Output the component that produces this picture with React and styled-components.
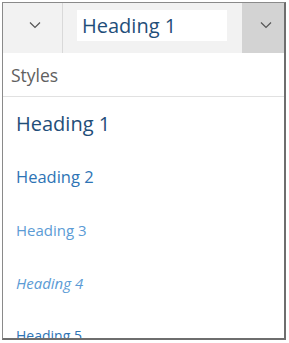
import React from "react";
import styled, { createGlobalStyle } from "styled-components";

const GlobalStyle = createGlobalStyle`
  html, body {
    margin: 0;
    padding: 0;
    background: #ffffff;
  }
  body {
    font-family: "Open Sans", "Noto Sans", sans-serif;
  }
`;

const headings = [
  { label: "Heading 1", size: 20, color: "#1f4e79", weight: 400 },
  { label: "Heading 2", size: 16.5, color: "#2e74b5", weight: 500 },
  { label: "Heading 3", size: 15, color: "#5b9bd5", weight: 400 },
  { label: "Heading 4", size: 15, color: "#5b9bd5", weight: 400, italic: true },
  { label: "Heading 5", size: 14, color: "#2e74b5", weight: 400 },
];

const Chevron = () => (
  <svg width="12" height="8" viewBox="0 0 12 8" fill="none">
    <path d="M1 1.5 L6 6.5 L11 1.5" stroke="#555555" strokeWidth="1.2" />
  </svg>
);

const App = () => {
  return (
    <>
      <GlobalStyle />
      <Frame>
        <Toolbar>
          <ToolButton>
            <Chevron />
          </ToolButton>
          <InputWrap>
            <StyleInput>Heading 1</StyleInput>
          </InputWrap>
          <ToolButton $active>
            <Chevron />
          </ToolButton>
        </Toolbar>
        <SectionTitle>Styles</SectionTitle>
        <List>
          {headings.map((h) => (
            <Item
              key={h.label}
              $size={h.size}
              $color={h.color}
              $weight={h.weight}
              $italic={h.italic}
            >
              {h.label}
            </Item>
          ))}
        </List>
      </Frame>
    </>
  );
};

const Frame = styled.div`
  box-sizing: border-box;
  margin: 2px 0 0 2px;
  width: 284px;
  height: 338px;
  border-left: 1px solid #8a8a8a;
  border-top: 1px solid #8a8a8a;
  border-right: 2px solid #6e6e6e;
  border-bottom: 2px solid #6e6e6e;
  display: flex;
  flex-direction: column;
  overflow: hidden;
  background: #ffffff;
`;

const Toolbar = styled.div`
  display: flex;
  height: 50px;
  flex-shrink: 0;
  background: #f2f2f2;
`;

const ToolButton = styled.div`
  box-sizing: border-box;
  display: flex;
  align-items: center;
  justify-content: center;
  padding-left: 5px;
  padding-bottom: 6px;
  width: ${(p) => (p.$active ? "42px" : "60px")};
  background: ${(p) => (p.$active ? "#d3d3d3" : "#f2f2f2")};
  border-right: ${(p) => (p.$active ? "none" : "1px solid #d9d9d9")};
`;

const InputWrap = styled.div`
  flex: 1;
  padding: 7px 15px 0 14px;
`;

const StyleInput = styled.div`
  box-sizing: border-box;
  height: 31px;
  background: #ffffff;
  padding-left: 5px;
  font-size: 20px;
  line-height: 31px;
  color: #1f4e79;
  white-space: nowrap;
`;

const SectionTitle = styled.div`
  box-sizing: border-box;
  height: 44px;
  flex-shrink: 0;
  padding: 0 0 0 8px;
  display: flex;
  align-items: center;
  font-size: 17.5px;
  color: #606060;
  border-bottom: 1px solid #e1e1e1;
`;

const List = styled.div`
  display: flex;
  flex-direction: column;
  padding-left: 13px;
`;

const Item = styled.div`
  height: 53px;
  flex-shrink: 0;
  display: flex;
  align-items: center;
  font-size: ${(p) => p.$size}px;
  font-weight: ${(p) => p.$weight};
  font-style: ${(p) => (p.$italic ? "italic" : "normal")};
  color: ${(p) => p.$color};
  white-space: nowrap;
`;

export default App;
